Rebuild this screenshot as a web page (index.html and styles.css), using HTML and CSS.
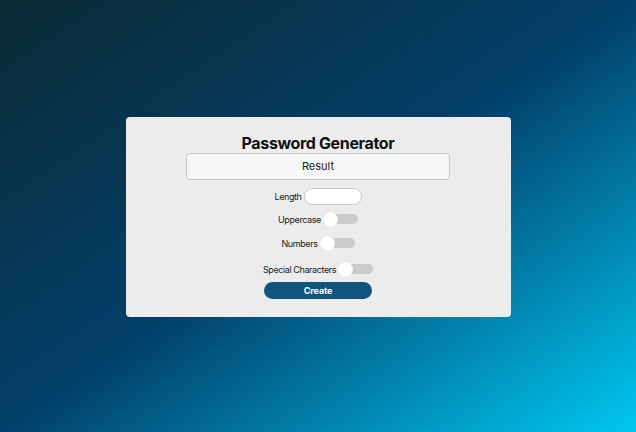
FILE: index.html
```html
<!DOCTYPE html>
<html lang="en">
<head>
<meta charset="utf-8">
<title>Password Generator</title>
<link rel="stylesheet" href="styles.css">
</head>
<body>
<main class="card">
  <h1 class="title">Password Generator</h1>
  <div class="result">Result</div>
  <div class="row row-length">
    <label class="label" for="len">Length</label>
    <input class="length-input" id="len" type="text">
  </div>
  <div class="row row-upper">
    <span class="label">Uppercase</span>
    <span class="toggle"><span class="knob"></span></span>
  </div>
  <div class="row row-numbers">
    <span class="label">Numbers</span>
    <span class="toggle"><span class="knob"></span></span>
  </div>
  <div class="row row-special">
    <span class="label">Special Characters</span>
    <span class="toggle"><span class="knob"></span></span>
  </div>
  <button class="create" type="button">Create</button>
</main>
</body>
</html>
```
FILE: styles.css
```css
html, body {
  margin: 0;
  height: 100%;
}
body {
  background: linear-gradient(to bottom right, #0b2a34 0%, #02406a 50%, #00c8f0 100%);
  font-family: Inter, "Open Sans", sans-serif;
  display: flex;
  align-items: center;
  justify-content: center;
}
.card {
  width: 385px;
  height: 200px;
  box-sizing: border-box;
  background: #ececec;
  border-radius: 4px;
  display: flex;
  flex-direction: column;
  align-items: center;
  padding-top: 16px;
  margin-top: 1px;
}
.title {
  margin: 0;
  font-size: 16px;
  line-height: 20px;
  font-weight: 700;
  color: #111;
  letter-spacing: -0.35px;
}
.result {
  width: 264px;
  height: 27px;
  box-sizing: border-box;
  border: 1px solid #c4c4c4;
  border-radius: 4px;
  background: #f7f7f7;
  display: flex;
  align-items: center;
  justify-content: center;
  font-size: 11px;
  color: #222;
}
.row {
  display: flex;
  align-items: center;
  justify-content: center;
  gap: 2px;
}
.label {
  font-size: 9px;
  color: #222;
  letter-spacing: -0.4px;
}
.row-length { margin-top: 8px; height: 17px; }
.row-upper { margin-top: 7px; height: 15px; }
.row-numbers { margin-top: 9px; height: 15px; }
.row-special { margin-top: 11px; height: 15px; }
.length-input {
  width: 58px;
  height: 17px;
  box-sizing: border-box;
  border: 1px solid #c8c8c8;
  border-radius: 9px;
  background: #fff;
  padding: 0;
  margin: 0;
  outline: none;
}
.toggle {
  position: relative;
  width: 35px;
  height: 15px;
  display: flex;
  align-items: center;
}
.toggle::before {
  content: "";
  position: absolute;
  left: 6px;
  right: 0;
  top: 2.5px;
  height: 10px;
  border-radius: 5px;
  background: #cbcbcb;
}
.knob {
  position: relative;
  width: 15px;
  height: 15px;
  border-radius: 50%;
  background: #fff;
  box-shadow: 0 0 1px rgba(0,0,0,0.15);
}
.create {
  margin-top: 5px;
  width: 108px;
  height: 17px;
  border: none;
  border-radius: 9px;
  background: #11557e;
  color: #fff;
  font-family: Inter, sans-serif;
  font-weight: 700;
  font-size: 9px;
  letter-spacing: -0.1px;
  padding: 0;
}
```
